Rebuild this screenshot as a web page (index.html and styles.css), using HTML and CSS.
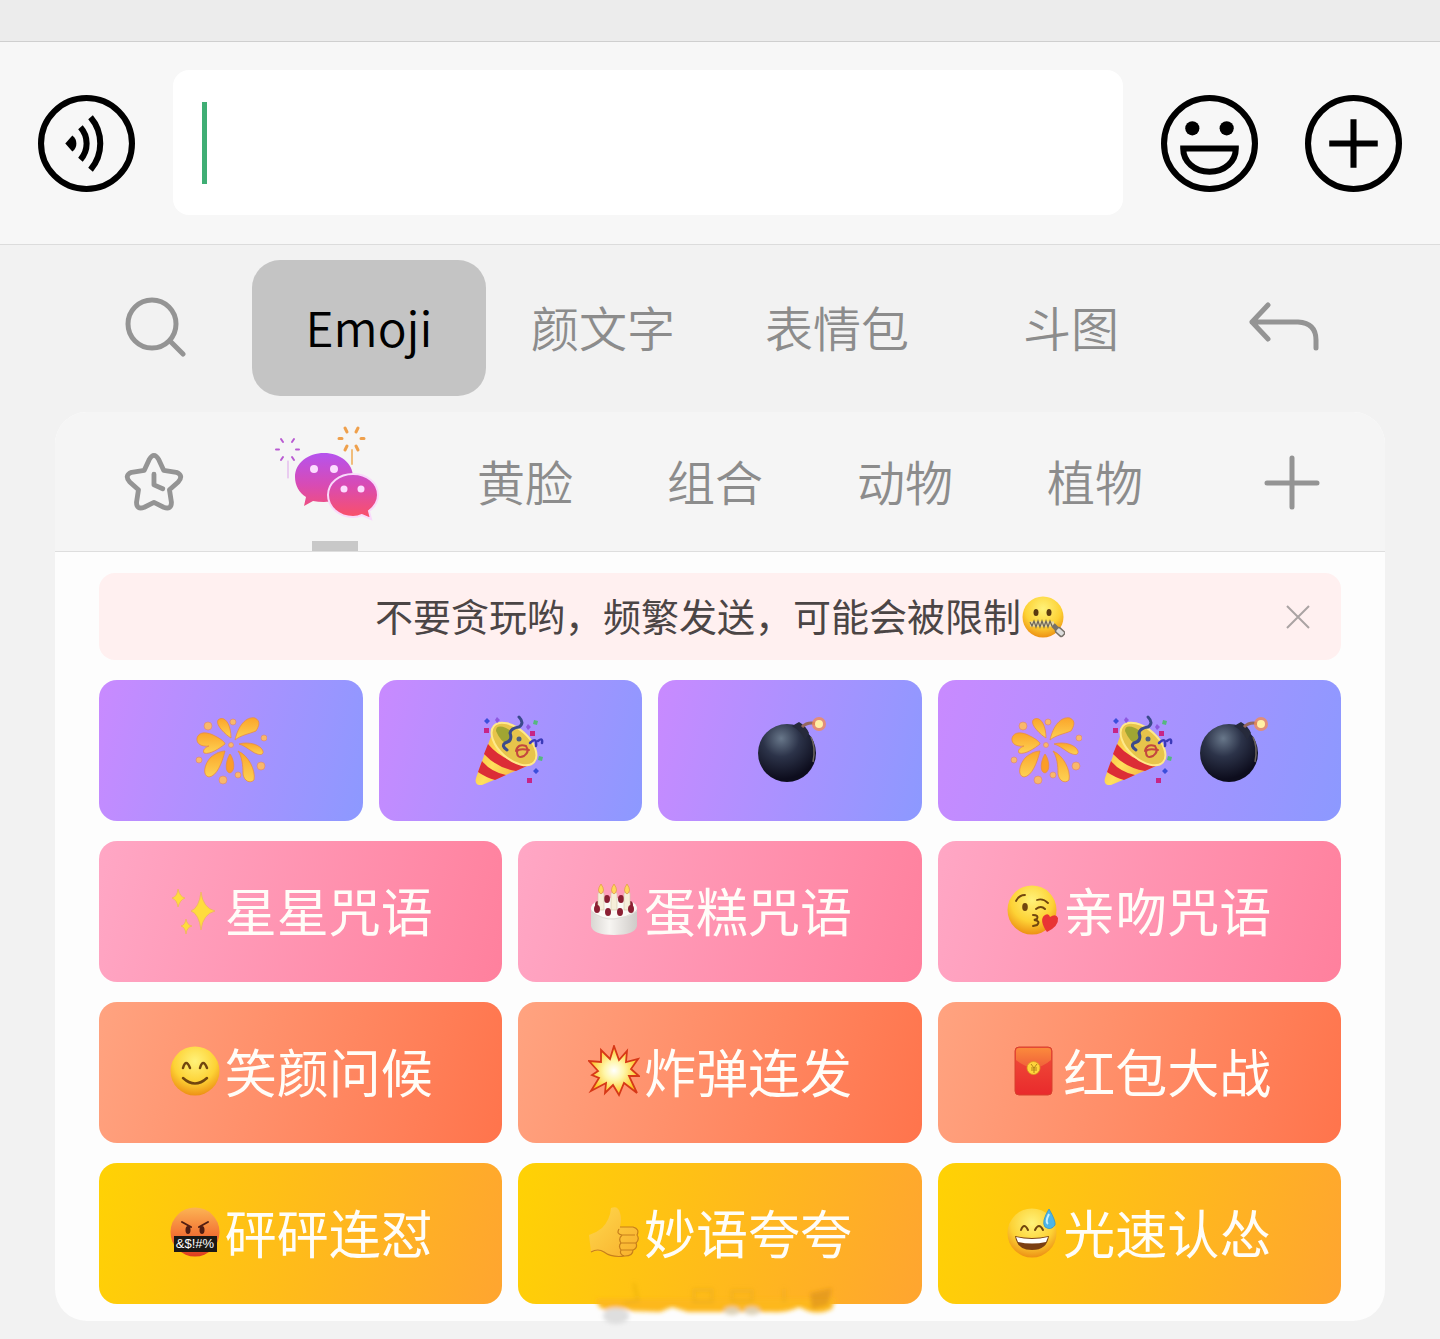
FILE: index.html
```html
<!doctype html>
<html lang="zh-CN">
  <head>
    <meta charset="UTF-8" />
    <meta name="viewport" content="width=device-width, initial-scale=1.0" />
    <title>Emoji 键盘</title>
    <link rel="stylesheet" href="styles.css">
  </head>
  <body>
    <!-- Shared emoji drawings -->
    <svg class="sprite" width="0" height="0" aria-hidden="true">
      <defs>
        <radialGradient id="face" cx="0.5" cy="0.3" r="0.72">
          <stop offset="0" stop-color="#fff27a" />
          <stop offset="0.6" stop-color="#fdd235" />
          <stop offset="1" stop-color="#ec8c12" />
        </radialGradient>
        <linearGradient id="angry" x1="0" y1="0" x2="0" y2="1">
          <stop offset="0" stop-color="#fcb454" />
          <stop offset="0.5" stop-color="#f47a37" />
          <stop offset="1" stop-color="#dc3c20" />
        </linearGradient>
        <linearGradient id="petal" x1="0" y1="0" x2="0" y2="1">
          <stop offset="0" stop-color="#fba52a" />
          <stop offset="1" stop-color="#fdd253" />
        </linearGradient>
        <radialGradient id="iron" cx="0.4" cy="0.25" r="0.7">
          <stop offset="0" stop-color="#68778a" />
          <stop offset="0.45" stop-color="#2c3349" />
          <stop offset="1" stop-color="#0d0d1d" />
        </radialGradient>
        <linearGradient id="cone" x1="0" y1="0" x2="1" y2="0.6">
          <stop offset="0" stop-color="#f1a92c" />
          <stop offset="0.5" stop-color="#ffe05c" />
          <stop offset="1" stop-color="#f0a93a" />
        </linearGradient>
        <radialGradient id="blast">
          <stop offset="0" stop-color="#fff" />
          <stop offset="0.4" stop-color="#fff6a8" />
          <stop offset="1" stop-color="#fcc21e" />
        </radialGradient>
        <linearGradient id="packet" x1="0" y1="0" x2="0" y2="1">
          <stop offset="0" stop-color="#f0503a" />
          <stop offset="1" stop-color="#e92a2c" />
        </linearGradient>
        <linearGradient id="flap" x1="0" y1="0" x2="0" y2="1">
          <stop offset="0" stop-color="#fb8a3c" />
          <stop offset="1" stop-color="#f0603a" />
        </linearGradient>
        <linearGradient id="thumb" x1="0" y1="0" x2="1" y2="1">
          <stop offset="0" stop-color="#ffd84d" />
          <stop offset="1" stop-color="#f8b02c" />
        </linearGradient>
        <linearGradient id="cream" x1="0" y1="0" x2="1" y2="0">
          <stop offset="0" stop-color="#d9d6d2" />
          <stop offset="0.4" stop-color="#f7f5f2" />
          <stop offset="1" stop-color="#cfcbc8" />
        </linearGradient>
        <linearGradient id="bubble" gradientUnits="userSpaceOnUse" x1="0" y1="452" x2="0" y2="518">
          <stop offset="0" stop-color="#b453f0" />
          <stop offset="0.5" stop-color="#d84bb4" />
          <stop offset="1" stop-color="#fb5066" />
        </linearGradient>
        <filter id="soft" x="-20%" y="-40%" width="140%" height="180%">
          <feGaussianBlur stdDeviation="2" />
        </filter>

        <symbol id="firework" viewBox="0 -1 72 72">
          <g fill="url(#petal)" stroke="#e88d45" stroke-width="0.8">
            <path d="M40 26C43 12 51 2 60 4C66 7 64 12 61 17C54 20 46 21 40 26Z" />
            <path d="M36 24C31 21 20 11 23 6C29 1 36 9 36 24Z" />
            <path d="M30 30C25 34 15 41 9 39C7 36 11 33 14 32C7 33 1 30 2 24C4 17 13 18 20 22C26 25 30 28 30 30Z" />
            <path d="M44 30C54 27 66 31 68 37C69 42 63 41 58 38C52 34 48 31 44 30Z" />
            <path d="M30 37C27 49 22 62 14 63C7 62 9 50 16 43C21 39 26 37 30 37Z" />
            <path d="M43 37C53 41 61 56 59 66C55 70 49 67 48 60C48 51 47 43 43 37Z" />
            <path d="M35 40C39 45 41 57 35 59C29 58 31 46 35 40Z" fill="#fb9d28" />
          </g>
          <g fill="#f9b86a" stroke="#dd8a76" stroke-width="0.7">
            <circle cx="36" cy="31" r="2.5" />
            <circle cx="13" cy="12" r="4" />
            <circle cx="38" cy="8" r="3" />
            <circle cx="69" cy="24" r="3" />
            <circle cx="4" cy="46" r="3" />
            <circle cx="28" cy="66" r="4" />
            <circle cx="43" cy="61" r="3" />
            <circle cx="66" cy="52" r="4" />
          </g>
        </symbol>

        <symbol id="popper" viewBox="-1 -1 72 72">
          <path d="M19 14L1 64Q-1 72 7 71L57 50Q64 44 58 36L34 10Z" fill="url(#cone)" />
          <path d="M13 30Q28 48 54 51L41 57Q22 54 9 40Z" fill="#dc2d36" />
          <path d="M7 47Q16 58 31 61L20 66Q10 63 3 58Z" fill="#dc2d36" />
          <ellipse cx="39" cy="30" rx="27" ry="15" transform="rotate(42 39 30)" fill="#e7c44b" stroke="#ffe98a" stroke-width="2" />
          <path d="M21 17Q21 10 31 14Q40 18 36 28Q28 33 21 17Z" fill="#a0a532" />
          <g fill="none" stroke-linecap="round">
            <path d="M44 3Q50 9 44 13Q36 14 35 19Q38 27 30 29Q26 32 32 36" stroke="#3b4a8c" stroke-width="3" />
            <path d="M41 37Q43 29 51 32Q55 38 49 42Q42 45 42 38Q43 34 54 36" stroke="#c4463e" stroke-width="2" />
            <path d="M55 29Q62 22 61 32M63 27Q68 23 67 29" stroke="#3b3ab8" stroke-width="2.5" />
          </g>
          <circle cx="44" cy="25" r="2.5" fill="#51607f" />
          <path d="M12 4l3 3-3 3-3-3ZM61 54l3 3-3 3-3-3Z" fill="#3c4edb" />
          <path d="M22 3l3 3-3 3-2-3ZM53 10l3 3-3 3-2-3Z" fill="#8e58e0" />
          <path d="M9 14h5v5H9ZM55 17h5v5h-5ZM52 64h5v5h-5Z" fill="#c72586" />
          <path d="M59 6l4 1-1 4-4-1ZM64 42l4 1-1 4-4-1Z" fill="#55b87e" />
        </symbol>

        <symbol id="bomb" viewBox="-3 0 72 72">
          <circle cx="30" cy="40" r="29" fill="url(#iron)" />
          <path d="M35 13L42 9Q49 13 52 20L48 27Q44 18 35 13Z" fill="#262a3b" />
          <path d="M45 14Q51 8 60 11" fill="none" stroke="#94685e" stroke-width="3" />
          <path d="M54 24Q59 34 56 49" fill="none" stroke="#6f665f" stroke-width="1.5" />
          <circle cx="62" cy="11" r="7" fill="#f18c58" opacity="0.8" />
          <circle cx="62" cy="11" r="4" fill="#fff0a5" />
        </symbol>

        <symbol id="zipper" viewBox="0 0 44 44">
          <circle cx="22" cy="22" r="20.5" fill="url(#face)" />
          <ellipse cx="15" cy="17.5" rx="2.5" ry="3.5" fill="#5b3a10" />
          <ellipse cx="28" cy="17.5" rx="2.5" ry="3.5" fill="#5b3a10" />
          <path d="M9 29H33" stroke="#e6d9a8" stroke-width="5" />
          <path d="M9 27l2 4 2-5 2 6 2-6 2 6 2-6 2 6 2-6 2 6 2-6 2 5" fill="none" stroke="#6c6557" stroke-width="1.2" />
          <path d="M32 30L36 34" stroke="#77716a" stroke-width="5" />
          <rect x="35" y="33" width="9" height="6" rx="2" transform="rotate(42 38 36)" fill="#ddd" stroke="#77716a" stroke-width="1.5" />
        </symbol>

        <symbol id="sparkles" viewBox="0 0 52 52">
          <g fill="#ffdc3d" stroke="#edb85b" stroke-width="0.8">
            <path d="M32 8Q34 24 46 27Q34 30 32 46Q30 30 22 27Q30 24 32 8Z" />
            <path d="M9 5Q11 13 16 14Q11 16 9 23Q8 16 3 14Q8 13 9 5Z" />
            <path d="M17 35Q18 41 23 42Q18 43 17 50Q16 43 12 42Q16 41 17 35Z" />
          </g>
        </symbol>

        <symbol id="cake" viewBox="0 0 52 52">
          <path d="M3 24V42Q5 51 26 51T49 42V24Z" fill="url(#cream)" />
          <ellipse cx="26" cy="24" rx="23" ry="10" fill="#fbf9f5" />
          <path d="M3 27Q14 36 26 35T49 27" fill="none" stroke="#dedad5" />
          <g fill="#8c1f33">
            <ellipse cx="10" cy="21" rx="3" ry="4" />
            <ellipse cx="19" cy="15" rx="3" ry="4" />
            <ellipse cx="33" cy="15" rx="3" ry="4" />
            <ellipse cx="42" cy="21" rx="3" ry="4" />
          </g>
          <path d="M10 9h6v17h-6ZM23 9h6v17h-6ZM36 9h6v17h-6Z" fill="#f6eed9" stroke="#d4c6a9" stroke-width="0.6" />
          <g fill="#8c1f33">
            <ellipse cx="9" cy="25" rx="3" ry="4" />
            <ellipse cx="20" cy="28" rx="3" ry="4" />
            <ellipse cx="32" cy="28" rx="3" ry="4" />
            <ellipse cx="43" cy="25" rx="3" ry="4" />
          </g>
          <path d="M13 0q5 7 0 10q-5-3 0-10ZM26 0q5 7 0 10q-5-3 0-10ZM39 0q5 7 0 10q-5-3 0-10Z" fill="#ffd75a" stroke="#dfa147" stroke-width="0.8" />
        </symbol>

        <symbol id="kiss" viewBox="0 0 52 52">
          <circle cx="25" cy="26" r="24.5" fill="url(#face)" />
          <path d="M9 17Q12 11 18 11M30 16Q36 14 41 19" fill="none" stroke="#71460e" stroke-width="1.8" stroke-linecap="round" />
          <ellipse cx="18" cy="23" rx="2.8" ry="4" fill="#71460e" />
          <path d="M29 25Q34 21 38 25M26 31Q32 31 30 35L27 36Q34 37 30 41L26 42" fill="none" stroke="#71460e" stroke-width="2" stroke-linecap="round" />
          <path d="M40 48C35 41 33 34 38 31Q42 29 43 33Q49 29 51 34Q52 42 40 48Z" fill="#e93434" />
        </symbol>

        <symbol id="smile" viewBox="0 0 52 52">
          <circle cx="26" cy="26" r="24.5" fill="url(#face)" />
          <path d="M14 23Q17 13 21 23M31 23Q34 13 38 23M14 33Q26 44 38 33" fill="none" stroke="#71460e" stroke-width="2.5" stroke-linecap="round" />
        </symbol>

        <symbol id="boom" viewBox="0 0 52 52">
          <path d="M26 1L31 15L39 6L38 17L50 14L43 24L51 31L41 31L49 48L36 38L31 50L25 40L17 48L18 38L3 46L11 33L4 30L10 26L1 16L13 17L13 5L22 14Z" fill="url(#blast)" stroke="#d73817" stroke-width="1.8" />
        </symbol>

        <symbol id="redpacket" viewBox="0 0 52 52">
          <rect x="8" y="2" width="37" height="48" rx="4" fill="url(#packet)" stroke="#d8402c" />
          <path d="M9 15V6Q9 3 12 3H41Q44 3 44 6V15Q27 30 9 15Z" fill="url(#flap)" />
          <circle cx="26.5" cy="23" r="6.5" fill="#ffd43b" stroke="#d99a20" stroke-width="0.8" />
          <path d="M24 19l3 4 3-4M24 23h6M24 25h6M27 23v5" fill="none" stroke="#b3851a" stroke-width="1" />
        </symbol>

        <symbol id="swear" viewBox="0 0 52 52">
          <circle cx="26" cy="26" r="24.5" fill="url(#angry)" />
          <path d="M13 16L22 21M39 16L30 21" stroke="#501d12" stroke-width="2" stroke-linecap="round" />
          <ellipse cx="19" cy="24" rx="2.5" ry="4" fill="#501d12" />
          <ellipse cx="33" cy="24" rx="2.5" ry="4" fill="#501d12" />
          <rect x="5" y="30" width="43" height="16" fill="#1c1815" />
          <text x="26" y="42" text-anchor="middle" font-family="Liberation Sans, sans-serif" font-size="13" fill="#fff">&amp;$!#%</text>
        </symbol>

        <symbol id="like" viewBox="0 0 52 52">
          <path d="M1 29Q8 27 14 22Q22 14 23 2Q30-1 32 7Q34 13 32 21H45Q52 23 49 29Q52 33 48 37Q50 42 45 44Q45 50 37 50Q24 52 16 46Q9 44 3 46Z" fill="url(#thumb)" />
          <path d="M47 29H34Q28 28 31 23M48 37H33M45 44H33M34 29Q30 33 33 37Q30 40 33 44Q31 48 36 50M3 46Q10 42 16 46Q24 52 37 50Q45 50 45 44Q50 42 48 37Q52 33 49 29Q52 23 45 21H32" fill="none" stroke="#c77f1b" stroke-width="1.2" />
        </symbol>

        <symbol id="sweat" viewBox="0 0 52 52">
          <circle cx="25" cy="27" r="24.5" fill="url(#face)" />
          <path d="M14 24Q17 16 21 24M28 24Q32 16 36 24" fill="none" stroke="#71460e" stroke-width="2" stroke-linecap="round" />
          <path d="M8 30Q25 34 42 30Q40 44 25 44T8 30Z" fill="#7b3f12" />
          <path d="M9 31Q25 35 41 31L39 36Q25 39 11 36Z" fill="#fff" />
          <path d="M42 3Q49 15 48 19Q44 25 38 21Q34 16 42 3Z" fill="#4db5e8" stroke="#3795c8" stroke-width="0.8" />
          <path d="M42 8Q38 16 41 18" fill="none" stroke="#c9f0ff" stroke-width="2" />
        </symbol>
      </defs>
    </svg>

    <div class="chat-strip"></div>

    <form class="input-bar">
      <button type="button" class="round-btn" aria-label="语音">
        <svg viewBox="0 0 96 96">
          <circle cx="48" cy="48" r="45" />
          <path d="M27 48L34 40Q38 43 38 48T34 56Z" fill="#000" stroke="none" />
          <path d="M42 32A24 24 0 0 1 42 64M52 22A40 40 0 0 1 52 74" />
        </svg>
      </button>
      <div class="input-box">
        <span class="caret"></span>
        <input type="text" name="message" aria-label="消息" />
      </div>
      <button type="button" class="round-btn" aria-label="表情">
        <svg viewBox="0 0 96 96">
          <circle cx="48" cy="48" r="45" />
          <circle cx="31" cy="33" r="7" fill="#000" stroke="none" />
          <circle cx="65" cy="33" r="7" fill="#000" stroke="none" />
          <path d="M22 53H74C74 66 63 76 48 76S22 66 22 53Z" />
        </svg>
      </button>
      <button type="button" class="round-btn more" aria-label="更多">
        <svg viewBox="0 0 96 96">
          <circle cx="48" cy="48" r="45" />
          <path d="M48 24V72M24 48H72" />
        </svg>
      </button>
    </form>

    <main class="keyboard">
      <nav class="tabs">
        <button type="button" class="tab" aria-label="搜索">
          <svg class="line-icon" width="64" height="64" viewBox="0 -1 64 64">
            <circle cx="30" cy="29" r="24" />
            <path d="M48 46L61 59" />
          </svg>
        </button>
        <button type="button" class="tab active">Emoji</button>
        <button type="button" class="tab">颜文字</button>
        <button type="button" class="tab">表情包</button>
        <button type="button" class="tab">斗图</button>
        <button type="button" class="tab" aria-label="返回">
          <svg class="line-icon" width="80" height="64" viewBox="0 -1 80 64">
            <path d="M21 10L5 27L21 44M5 27H51Q69 28 69 45V53" />
          </svg>
        </button>
      </nav>

      <section class="panel">
        <nav class="categories">
          <button type="button" class="category side" aria-label="最近和收藏">
            <svg class="line-icon" width="64" height="64" viewBox="-2 -1 66 66">
              <path d="M22 20L27 9Q32 0 37 9L42 20L55 22Q63 25 57 32L48 40L50 53Q50 61 42 58L32 53L22 58Q14 61 14 53L16 40L7 32Q1 25 9 22Z" />
              <path d="M32 24V35L41 39" />
            </svg>
          </button>
          <button type="button" class="category current" aria-label="烟花">
            <svg width="120" height="124" viewBox="275 418 120 124">
              <g fill="none" stroke="#b95ad2" stroke-width="2" stroke-linecap="round">
                <path d="M276 449.5h3M296 449.5h3M281 439l2 3M294 439l-2 3M281 460l2-3M294 460l-2-3" />
                <path d="M288 461V478" stroke="#dda3ea" stroke-width="1" />
              </g>
              <g fill="none" stroke="#efa04c" stroke-width="3" stroke-linecap="round">
                <path d="M339 438.5h3M361 438.5h3M345 428l2 4M358 428l-2 4M345 450l2-4M358 450l-2-4" />
                <path d="M352 450V464" stroke="#f0bd7b" stroke-width="2" />
              </g>
              <path d="M324 453C340 453 353 463 353 477S340 502 324 502Q318 502 313 501L304 506L306 497C299 493 295 485 295 477C295 463 308 453 324 453Z" fill="url(#bubble)" />
              <path d="M353 474C367 474 378 483 378 495Q378 504 369 511L371 519L362 515Q358 517 353 517C339 517 328 507 328 495S339 474 353 474Z" fill="url(#bubble)" stroke="#f9d9fb" stroke-width="2" />
              <g fill="#fcdcff">
                <circle cx="314" cy="469" r="4" />
                <circle cx="334" cy="469" r="4" />
                <circle cx="344" cy="489" r="3.5" />
                <circle cx="361" cy="489" r="3.5" />
              </g>
            </svg>
          </button>
          <button type="button" class="category">黄脸</button>
          <button type="button" class="category">组合</button>
          <button type="button" class="category">动物</button>
          <button type="button" class="category">植物</button>
          <button type="button" class="category side" aria-label="添加">
            <svg class="line-icon" width="64" height="64" viewBox="0 0 64 64">
              <path d="M31 8V57M6 33H56" />
            </svg>
          </button>
        </nav>

        <div class="panel-body">
          <div class="notice">
            <p>不要贪玩哟，频繁发送，可能会被限制</p>
            <svg class="notice-emoji"><use href="#zipper" /></svg>
            <button type="button" class="close" aria-label="关闭">
              <svg width="26" height="26" viewBox="0 0 26 26"><path d="M2 2L24 24M24 2L2 24" /></svg>
            </button>
          </div>

          <div class="spells">
            <div class="effects">
              <button type="button" class="spell purple" aria-label="烟花"><svg class="big"><use href="#firework" /></svg></button>
              <button type="button" class="spell purple" aria-label="彩带"><svg class="big"><use href="#popper" /></svg></button>
              <button type="button" class="spell purple" aria-label="炸弹"><svg class="big"><use href="#bomb" /></svg></button>
            </div>
            <button type="button" class="spell purple combo" aria-label="烟花彩带炸弹">
              <svg class="big"><use href="#firework" /></svg>
              <svg class="big"><use href="#popper" /></svg>
              <svg class="big"><use href="#bomb" /></svg>
            </button>

            <button type="button" class="spell pink"><svg class="small"><use href="#sparkles" /></svg>星星咒语</button>
            <button type="button" class="spell pink"><svg class="small"><use href="#cake" /></svg>蛋糕咒语</button>
            <button type="button" class="spell pink"><svg class="small"><use href="#kiss" /></svg>亲吻咒语</button>

            <button type="button" class="spell orange"><svg class="small"><use href="#smile" /></svg>笑颜问候</button>
            <button type="button" class="spell orange"><svg class="small"><use href="#boom" /></svg>炸弹连发</button>
            <button type="button" class="spell orange"><svg class="small"><use href="#redpacket" /></svg>红包大战</button>

            <button type="button" class="spell yellow"><svg class="small"><use href="#swear" /></svg>砰砰连怼</button>
            <button type="button" class="spell yellow">
              <svg class="small"><use href="#like" /></svg>妙语夸夸
              <svg class="smudge" viewBox="0 0 260 60">
                <g filter="url(#soft)">
                  <ellipse cx="28" cy="43" rx="13" ry="8" fill="#dedede" />
                  <path d="M8 26H247L244 36Q232 42 220 38L211 34Q200 40 184 39H100L84 34L72 39L44 38Q26 32 18 37Q10 36 8 26Z" fill="#fdb81e" />
                  <path d="M46 10L50 28L36 30M106 17h18v12h-18ZM144 18h20v10h-20ZM196 16v14" fill="none" stroke="#dba41d" stroke-width="3" opacity="0.4" />
                  <path d="M222 20L244 15L240 32L224 36Z" fill="#dd941c" opacity="0.7" />
                  <ellipse cx="144" cy="38" rx="8" ry="4" fill="#ddd2b8" />
                  <ellipse cx="164" cy="38" rx="8" ry="4" fill="#ddd2b8" />
                </g>
              </svg>
            </button>
            <button type="button" class="spell yellow"><svg class="small"><use href="#sweat" /></svg>光速认怂</button>
          </div>
        </div>
      </section>
    </main>
  </body>
</html>
```
FILE: styles.css
```css
* {
  box-sizing: border-box;
}
body {
  margin: 0;
  background: #f2f2f2;
  font-family: "Noto Sans CJK SC", sans-serif;
}
button {
  display: flex;
  align-items: center;
  justify-content: center;
  margin: 0;
  padding: 0;
  border: none;
  background: none;
  font-family: inherit;
  cursor: pointer;
}
svg {
  display: block;
  flex: none;
}
.sprite {
  position: absolute;
}

/* Message input */
.chat-strip {
  height: 42px;
  background: #ececec;
  border-bottom: 1px solid #cfcfcf;
}
.input-bar {
  display: flex;
  align-items: center;
  gap: 38px;
  padding: 28px 38px 29px;
  background: #f7f7f7;
  border-bottom: 1px solid #dcdcdc;
}
.round-btn {
  padding-top: 2px;
}
.round-btn svg {
  width: 97px;
  height: 97px;
  fill: none;
  stroke: #000;
  stroke-width: 6;
}
.round-btn.more {
  margin-left: 9px;
}
.input-box {
  flex: 1;
  display: flex;
  align-items: center;
  height: 145px;
  padding: 0 29px;
  background: #fff;
  border-radius: 16px;
}
.caret {
  width: 5px;
  height: 82px;
  background: #3fae74;
}
.input-box input {
  flex: 1;
  min-width: 0;
  height: 82px;
  border: none;
  outline: none;
  background: none;
  font-size: 48px;
}

/* Keyboard tabs */
.keyboard {
  padding: 15px 55px 18px;
}
.tabs {
  display: grid;
  grid-template-columns: 197fr repeat(4, 234fr) 197fr;
  margin-bottom: 16px;
}
.tab {
  height: 136px;
  padding-bottom: 4px;
  border-radius: 28px;
  font-size: 48px;
  font-weight: 350;
  color: #8c8c8c;
}
.tab.active {
  background: #c4c4c4;
  color: #000;
}
.line-icon {
  fill: none;
  stroke: #949494;
  stroke-width: 5;
  stroke-linecap: round;
  stroke-linejoin: round;
}

/* Emoji panel */
.panel {
  background: #fdfdfd;
  border-radius: 32px;
}
.categories {
  display: grid;
  grid-template-columns: 185fr repeat(5, 190fr) 195fr;
  background: #f5f5f5;
  border-bottom: 1px solid #dedede;
  border-radius: 32px 32px 0 0;
}
.category {
  position: relative;
  height: 139px;
  padding-bottom: 4px;
  font-size: 48px;
  font-weight: 350;
  color: #8c8c8c;
}
.category.side {
  padding: 0 0 0 10px;
}
.category.current::after {
  content: "";
  position: absolute;
  bottom: 0;
  left: 50%;
  width: 46px;
  height: 10px;
  margin-left: -23px;
  background: #c8c8c8;
}
.panel-body {
  padding: 21px 44px 17px;
}
.notice {
  position: relative;
  display: flex;
  align-items: center;
  justify-content: center;
  height: 87px;
  margin-bottom: 20px;
  background: #fff0f0;
  border-radius: 16px;
  font-size: 38px;
  color: #4b4545;
}
.notice p {
  margin: 0;
  padding-bottom: 4px;
}
.notice-emoji {
  width: 44px;
  height: 44px;
}
.close {
  position: absolute;
  right: 30px;
}
.close svg {
  fill: none;
  stroke: #aaa3a3;
  stroke-width: 2;
}

/* Spell buttons */
.spells {
  display: grid;
  grid-template-columns: repeat(3, 1fr);
  gap: 20px 16px;
}
.effects {
  grid-column: span 2;
  display: grid;
  grid-template-columns: repeat(3, 1fr);
  gap: 16px;
}
.spell {
  position: relative;
  gap: 4px;
  height: 141px;
  padding-bottom: 4px;
  border-radius: 18px;
  font-size: 52px;
  color: #fffdf8;
}
.combo {
  gap: 21px;
}
.big {
  width: 72px;
  height: 72px;
}
.small {
  width: 52px;
  height: 52px;
}
.purple {
  background: linear-gradient(105deg, #c98aff, #8c99ff);
}
.pink {
  background: linear-gradient(105deg, #ffa7c5, #ff809d);
}
.orange {
  background: linear-gradient(105deg, #ffa380, #ff744c);
}
.yellow {
  background: linear-gradient(105deg, #ffd204, #ffa530);
}
.smudge {
  position: absolute;
  left: 70px;
  top: 110px;
  width: 260px;
  height: 60px;
}
```
